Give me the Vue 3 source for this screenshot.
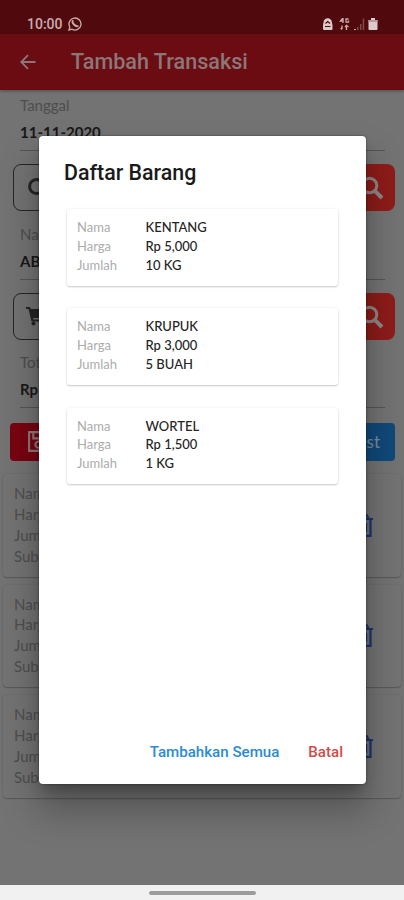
<script setup>
const goods = [
  { name: 'KENTANG', price: 'Rp 5,000', amount: '10 KG' },
  { name: 'KRUPUK', price: 'Rp 3,000', amount: '5 BUAH' },
  { name: 'WORTEL', price: 'Rp 1,500', amount: '1 KG' },
]
const fields = [
  { label: 'Tanggal', value: '11-11-2020', icon: 'refresh' },
  { label: 'Nama', value: 'ABC', icon: 'cart' },
]
const rowLabels = ['Nama', 'Harga', 'Jumlah', 'Subtotal']
</script>

<template>
  <div class="screen">
    <header class="status">
      <span class="clock">10:00</span>
      <svg class="wa" viewBox="0 0 14 14" fill="none" stroke="#c9adae">
        <path d="M1 13l.8-3A6 6 0 1 1 4 12.2z" stroke-width="1.3" />
        <path d="M4.7 4.1c-1 1.8 2.8 5.700 5 5" stroke-width="1.900" stroke-linecap="round" />
      </svg>
      <svg class="indicators" viewBox="0 0 58 14">
        <path d="M1.500 5.500a4.200 4.200 0 0 1 8.400 0L10.500 8v4q0 1-1 1H2q-1 0-1-1V8z" fill="#dccbcb" />
        <path d="M3.500 6.500l2.200-2 2.300 2M3 9.500h5.500" fill="none" stroke="#500a0e" stroke-width="1.200" />
        <g fill="none" stroke="#c9adae" stroke-width="1.300">
          <path d="M20.500 1.500l-2 2.500h3M21 1v5M26.500 2h-2.500v3.200h2.500v-1.700M20 8.500v3.500M18.700 11l1.300 1.500M24.500 13V8.500M23 10l1.500-1.700L26.500 10" />
        </g>
        <path d="M32 12h2v1h-2z" fill="#c9adae" />
        <path d="M35 10h1.500v3H35zM38 7h1.500v6H38zM40.700 1.500h1.500V13h-1.500z" fill="#81474a" />
        <path d="M49 1h4v2h2.500v9q0 1-1 1h-7q-1 0-1-1V3H49z" fill="#dccbcb" />
        <path d="M46.500 3h9v2h-9z" fill="#b89a9b" />
      </svg>
    </header>

    <div class="appbar">
      <svg viewBox="0 0 16 16" fill="none" stroke="#8b7778" stroke-width="1.800">
        <path d="M15.500 8H1.500M8 1.200L1.200 8L8 14.800" />
      </svg>
      <h1>Tambah Transaksi</h1>
    </div>

    <main>
      <section v-for="f in fields" :key="f.label" class="group">
        <div class="label">{{ f.label }}</div>
        <div class="value">{{ f.value }}</div>
        <div class="actions">
          <div class="outline">
            <svg v-if="f.icon === 'refresh'" viewBox="0 0 20 20" fill="none" stroke="#252525" stroke-width="3">
              <path d="M15.500 4.500a7 7 0 1 0 0 10" />
            </svg>
            <svg v-else viewBox="0 0 20 20" fill="#252525">
              <path d="M0 1h4l.7 2H20l-2.500 9H7l.4 1.600H17V15.500H5.500L2.600 3H0z" />
              <circle cx="7.500" cy="17.600" r="2" /><circle cx="15.500" cy="17.600" r="2" />
            </svg>
          </div>
          <div class="search">
            <svg viewBox="0 0 24 24" fill="none" stroke="#8f8585" stroke-width="3">
              <circle cx="9.500" cy="9.500" r="7.300" />
              <path d="M14.800 14.800L22 22" stroke-width="4" />
            </svg>
          </div>
        </div>
      </section>
      <section class="group total">
        <div class="label">Total</div>
        <div class="value">Rp 0</div>
      </section>

      <div class="buttons">
        <div class="save">
          <svg viewBox="0 0 22 22" fill="none" stroke="#927879" stroke-width="2">
            <path d="M2 2h15l3 3v15H2zM6 2v6h9V2" /><circle cx="11" cy="14" r="3" />
          </svg>
        </div>
        <div class="list">List</div>
      </div>

      <article v-for="n in 3" :key="n" class="entry">
        <div><p v-for="l in rowLabels" :key="l">{{ l }}</p></div>
        <svg viewBox="0 0 18 24" fill="none" stroke="#1a3670" stroke-width="2.200">
          <path d="M0 5h18M3 5v16.800h12.500V5M5 4l1.500-3h5L13.500 4M7 9v9M11 9v9" />
        </svg>
      </article>
    </main>

    <footer><i></i></footer>

    <div class="dialog">
      <h2>Daftar Barang</h2>
      <div class="goods">
        <div v-for="g in goods" :key="g.name" class="item">
          <span>Nama</span><b>{{ g.name }}</b>
          <span>Harga</span><b>{{ g.price }}</b>
          <span>Jumlah</span><b>{{ g.amount }}</b>
        </div>
      </div>
      <div class="choices">
        <button class="add">Tambahkan Semua</button>
        <button class="cancel">Batal</button>
      </div>
    </div>
  </div>
</template>

<style>
body { margin: 0; background: #737373; }
</style>

<style scoped>
* { box-sizing: border-box; }
.screen {
  position: relative;
  display: flex;
  flex-direction: column;
  width: 404px;
  height: 900px;
  overflow: hidden;
  background: #737373;
  font-family: Lato, sans-serif;
}
.status {
  flex: none;
  display: flex;
  align-items: center;
  height: 34px;
  padding: 13px 24px 0 27px;
  background: #500a0e;
}
.clock { font: 500 14px/20px Roboto, sans-serif; color: #c9adae; }
.wa { width: 14px; height: 14px; margin-left: 5px; }
.indicators { width: 58px; height: 14px; margin-left: auto; }
.appbar {
  flex: none;
  display: flex;
  align-items: center;
  height: 56px;
  padding-left: 20px;
  background: #6b0c12;
  box-shadow: 0 1px 3px #0005;
}
.appbar svg { width: 16px; height: 16px; margin-right: 35px; }
h1 { margin: 0; font: 500 21.600px/26px Roboto, sans-serif; color: #8b7778; }
main { flex: 1; display: flex; flex-direction: column; min-height: 0; }
.group { height: 128.500px; padding: 5px 9px 0 13px; }
.label { padding-left: 7px; font-size: 15px; line-height: 20px; color: #4e4e4e; }
.value {
  height: 36px;
  margin: 0 10px 0 7px;
  padding-top: 7px;
  border-bottom: 1px solid #555;
  font-size: 15px;
  font-weight: 700;
  line-height: 20px;
  color: #181818;
}
.actions { display: flex; gap: 12px; margin-top: 13px; }
.outline {
  flex: 1;
  height: 47px;
  padding: 12px;
  border: 1.500px solid #252525;
  border-radius: 8px;
}
.outline svg { width: 20px; height: 20px; }
.search { width: 64px; height: 47px; padding: 12px 0 0 29px; border-radius: 8px; background: #8d1c19; }
.search svg { width: 24px; height: 24px; }
.total { height: 76px; }
.total .value { word-spacing: -1px; }
.buttons { display: flex; justify-content: space-between; height: 38px; padding: 0 9px 0 10px; }
.save { width: 100px; padding: 7px 17px; border-radius: 4px; background: #790411; }
.save svg { width: 23px; height: 23px; }
.list {
  width: 100px;
  padding-right: 15px;
  border-radius: 4px;
  background: #10497a;
  font-size: 17px;
  line-height: 38px;
  text-align: right;
  color: #7b8d9e;
}
.entry {
  flex: none;
  display: flex;
  justify-content: space-between;
  align-items: center;
  height: 102.500px;
  margin: 0 3px 8px;
  padding: 0 28px 1px 11px;
  border-radius: 4px;
  background: #737373;
  box-shadow: 0 1px 1px #0003, 0 0 2px #0002;
}
.buttons + .entry { margin-top: 13px; }
.entry p { margin: 0; font-size: 15px; line-height: 20.800px; color: #4e4e4e; }
.entry svg { width: 18px; height: 24px; margin-top: 2px; }
footer { flex: none; display: flex; justify-content: center; height: 15px; padding-top: 6px; background: #f1f1f1; }
footer i { width: 107px; height: 4px; border-radius: 2px; background: #9c9c9c; }
.dialog {
  position: absolute;
  left: 39px;
  top: 136px;
  display: flex;
  flex-direction: column;
  width: 326.500px;
  height: 648px;
  padding: 23px 22.500px 20px 25px;
  border-radius: 4px;
  background: #fff;
  box-shadow: 0 9px 13px -4px #0004, 0 24px 36px 3px #0004, 0 0 2px #0008;
}
h2 { margin: 0; font: 500 21.400px/27px Roboto, sans-serif; color: #1a1a1a; }
.goods { display: flex; flex-direction: column; gap: 22.500px; margin: 23px 5px 0 3px; }
.item {
  display: grid;
  grid-template-columns: 68.500px 1fr;
  grid-auto-rows: 18.800px;
  align-content: start;
  height: 76.800px;
  padding: 9px 10px;
  border-radius: 3px;
  box-shadow: 0 1px 2px #0003, 0 0 3px #0001;
  font-size: 13px;
  line-height: 18.800px;
}
.item span { color: #acacac; }
.item b { font-weight: 500; color: #242424; }
.choices { display: flex; justify-content: flex-end; gap: 29px; margin-top: auto; }
.choices button { padding: 0; border: 0; background: none; font: 500 15.100px/24px Roboto, sans-serif; }
.choices .add { color: #2b8bd2; }
.choices .cancel { color: #d34a48; }
</style>
